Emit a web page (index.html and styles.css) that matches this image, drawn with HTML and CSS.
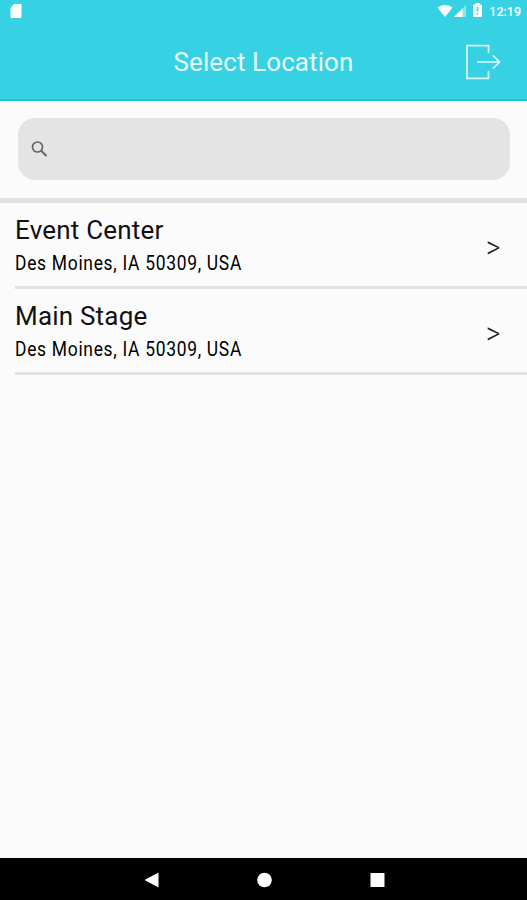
FILE: index.html
```html
<!DOCTYPE html>
<html lang="en">
<head>
  <meta charset="UTF-8">
  <meta name="viewport" content="width=device-width, initial-scale=1.0">
  <title>Select Location</title>
  <link rel="stylesheet" href="styles.css">
</head>
<body>
  <header>
    <div class="status-bar">
      <svg class="sd-card" width="12" height="14" viewBox="0 0 12 14">
        <path d="M4 0h6.5q1 0 1 1v12q0 1-1 1h-9q-1 0-1-1V4z" fill="#fff"/>
        <path d="M4 2.5v2M6 1.5v3M8 1.5v3" stroke="#b5edf4" stroke-width="0.8"/>
      </svg>
      <svg class="wifi" width="16" height="12" viewBox="0 0 16 12">
        <path d="M0.5 2.5Q8-2.3 15.5 2.5L8 12z" fill="#fff"/>
      </svg>
      <svg class="signal" width="12" height="12" viewBox="0 0 12 12">
        <path d="M12 0v12H0z" fill="#8be4ef"/>
        <path d="M8.5 3.5V12H0z" fill="#fff"/>
      </svg>
      <svg class="battery" width="9" height="14" viewBox="0 0 9 14">
        <path d="M2.5 0h4v1.5H8q1 0 1 1V13q0 1-1 1H1q-1 0-1-1V2.5q0-1 1-1h1.5z" fill="#fff"/>
        <path d="M4.5 4v4.5M4.5 10v1.5" stroke="#37d1e4" stroke-width="1.5"/>
      </svg>
      <span class="clock">12:19</span>
    </div>
    <div class="title-bar">
      <h1>Select Location</h1>
      <svg class="logout" width="36" height="36" viewBox="0 0 36 36" fill="none" stroke="#dcfaff" stroke-width="1.7">
        <path d="M23.5 9V1.7H2v32.6h21.5V27"/>
        <path d="M12 18h22M28 11.5l6.5 6.5-6.5 6.5"/>
      </svg>
    </div>
  </header>
  <main>
    <div class="search">
      <div class="search-box">
        <svg width="17" height="17" viewBox="0 0 17 17" fill="none" stroke="#666">
          <circle cx="6.5" cy="6" r="5" stroke-width="1.7"/>
          <path d="M10.200 9.7l5.300 5.300" stroke-width="2"/>
        </svg>
      </div>
    </div>
    <ul class="locations">
      <li>
        <div class="info">
          <h2>Event Center</h2>
          <p>Des Moines, IA 50309, USA</p>
        </div>
        <span class="arrow">&gt;</span>
      </li>
      <li>
        <div class="info">
          <h2>Main Stage</h2>
          <p>Des Moines, IA 50309, USA</p>
        </div>
        <span class="arrow">&gt;</span>
      </li>
    </ul>
  </main>
  <footer class="nav-bar">
    <svg width="15" height="16" viewBox="0 0 15 16"><path d="M0.5 8l14-7.500v15z" fill="#fff"/></svg>
    <svg width="15" height="16" viewBox="0 0 15 16"><circle cx="7.5" cy="8" r="7.3" fill="#fff"/></svg>
    <svg width="15" height="16" viewBox="0 0 15 16"><rect x="0.5" y="1" width="14" height="14" rx="0.5" fill="#fff"/></svg>
  </footer>
</body>
</html>
```

FILE: styles.css
```css
* {
  box-sizing: border-box;
}

body {
  display: flex;
  flex-direction: column;
  height: 100vh;
  margin: 0;
  font-family: Roboto, sans-serif;
  background-color: #fbfbfb;
  color: #111;
}

h1, h2, p {
  margin: 0;
  font-weight: 400;
}

svg {
  display: block;
}

header {
  height: 101px;
  background-color: #37d1e4;
  border-bottom: 2px solid #20c2d7;
  color: #fff;
}

.status-bar {
  display: flex;
  height: 24px;
  padding: 4px 6px 0 10px;
}

.wifi {
  margin-left: auto;
  margin-top: 1px;
}

.signal {
  margin: 1px 0 0 1px;
}

.battery {
  margin: -1px 0 0 7px;
}

.clock {
  margin-left: 7px;
  font-size: 12.5px;
  font-weight: 500;
  line-height: 15px;
}

.title-bar {
  display: grid;
  grid-template-columns: 62px 1fr 62px;
  align-items: center;
  height: 75px;
}

.title-bar h1 {
  grid-column: 2;
  font-size: 26px;
  letter-spacing: 0.1px;
  text-align: center;
  color: #e6fcff;
}

.search {
  padding: 17px 17px 18px 18px;
  border-bottom: 5px solid #e2e2e2;
}

.search-box {
  display: flex;
  align-items: center;
  height: 62px;
  padding-left: 13px;
  border-radius: 17px;
  background-color: #e4e4e4;
}

.locations {
  margin: 0;
  padding: 0 0 0 15px;
  list-style: none;
}

.locations li {
  display: flex;
  justify-content: space-between;
  height: 86px;
  padding: 11px 28px 0 0;
  border-bottom: 3px solid #e2e2e2;
}

.info h2 {
  font-size: 26px;
  letter-spacing: 0.2px;
  line-height: 32px;
}

/* condensed look for the address line */
.info p {
  width: max-content;
  font-size: 21px;
  letter-spacing: 0.85px;
  line-height: 34px;
  color: #000;
  transform: scaleX(0.83);
  transform-origin: left;
}

.arrow {
  font-size: 24px;
  font-weight: 300;
  line-height: 69px;
  color: #222;
  transform: scale(1.15, 1.3);
}

.nav-bar {
  display: flex;
  justify-content: center;
  align-items: center;
  gap: 98px;
  height: 42px;
  margin-top: auto;
  padding: 1px 0 0 1px;
  background-color: #000;
}
```
